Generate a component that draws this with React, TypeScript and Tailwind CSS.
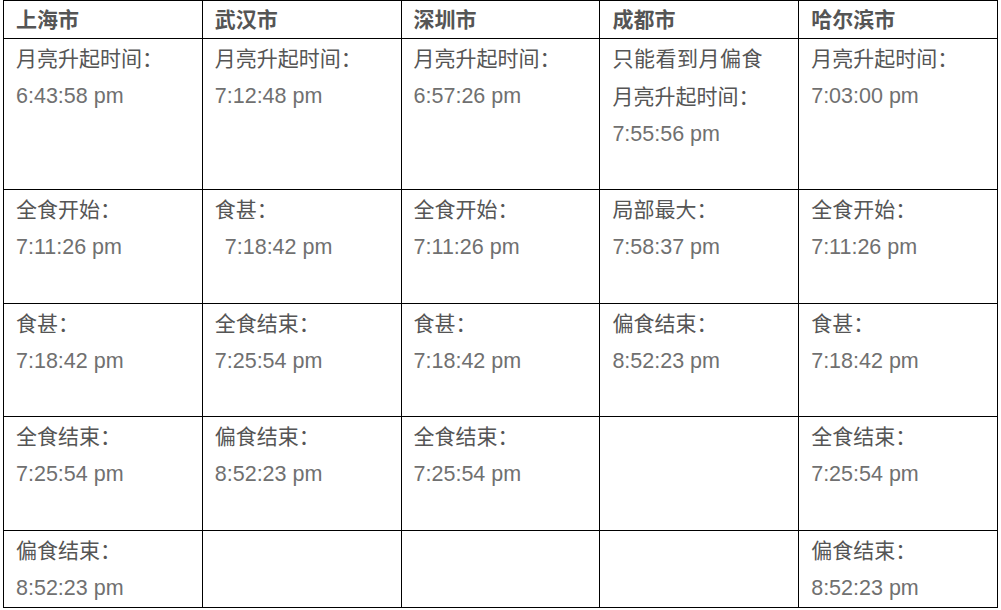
const cities = ["上海市", "武汉市", "深圳市", "成都市", "哈尔滨市"]

type Cell = { label?: string; time?: string; note?: string; indent?: boolean } | null

const rows: { h: string; cells: Cell[] }[] = [
  {
    h: "h-[151px]",
    cells: [
      { label: "月亮升起时间：", time: "6:43:58 pm" },
      { label: "月亮升起时间：", time: "7:12:48 pm" },
      { label: "月亮升起时间：", time: "6:57:26 pm" },
      { note: "只能看到月偏食", label: "月亮升起时间：", time: "7:55:56 pm" },
      { label: "月亮升起时间：", time: "7:03:00 pm" },
    ],
  },
  {
    h: "h-[114px]",
    cells: [
      { label: "全食开始：", time: "7:11:26 pm" },
      { label: "食甚：", time: "7:18:42 pm", indent: true },
      { label: "全食开始：", time: "7:11:26 pm" },
      { label: "局部最大：", time: "7:58:37 pm" },
      { label: "全食开始：", time: "7:11:26 pm" },
    ],
  },
  {
    h: "h-[113px]",
    cells: [
      { label: "食甚：", time: "7:18:42 pm" },
      { label: "全食结束：", time: "7:25:54 pm" },
      { label: "食甚：", time: "7:18:42 pm" },
      { label: "偏食结束：", time: "8:52:23 pm" },
      { label: "食甚：", time: "7:18:42 pm" },
    ],
  },
  {
    h: "h-[114px]",
    cells: [
      { label: "全食结束：", time: "7:25:54 pm" },
      { label: "偏食结束：", time: "8:52:23 pm" },
      { label: "全食结束：", time: "7:25:54 pm" },
      null,
      { label: "全食结束：", time: "7:25:54 pm" },
    ],
  },
  {
    h: "h-[76px]",
    cells: [
      { label: "偏食结束：", time: "8:52:23 pm" },
      null,
      null,
      null,
      { label: "偏食结束：", time: "8:52:23 pm" },
    ],
  },
]

const cjk = "font-['Noto_Sans_CJK_SC',sans-serif]"
const latin = "font-['Liberation_Sans','Noto_Sans_CJK_SC',sans-serif]"

const CellBody = ({ cell }: { cell: Cell }) => {
  if (!cell) return null
  return (
    <div className="-mt-[1px] flex flex-col">
      {cell.note && <div className={`${cjk} text-[21px] leading-[38px] tracking-[0.5px] text-[#555]`}>{cell.note}</div>}
      <div className={`${cjk} text-[21px] leading-[38px] text-[#555]`}>{cell.label}</div>
      <div className={`${latin} pt-[1px] text-[21.5px] leading-[38px] text-[#707070] ${cell.indent ? "pl-[10px]" : ""}`}>
        {cell.time}
      </div>
    </div>
  )
}

export default function App() {
  return (
    <div className="h-[610px] w-[1001px] overflow-hidden bg-white">
      <table className="ml-[3px] w-[995px] table-fixed border-collapse">
        <thead>
          <tr className="h-[38px]">
            {cities.map((c) => (
              <th
                key={c}
                className={`${cjk} border border-black px-[12px] pb-[1px] text-left align-middle text-[21px] font-bold text-[#555]`}
              >
                {c}
              </th>
            ))}
          </tr>
        </thead>
        <tbody>
          {rows.map((r, i) => (
            <tr key={i} className={r.h}>
              {r.cells.map((cell, j) => (
                <td key={j} className="border border-black px-[12px] align-top">
                  <CellBody cell={cell} />
                </td>
              ))}
            </tr>
          ))}
        </tbody>
      </table>
    </div>
  )
}
